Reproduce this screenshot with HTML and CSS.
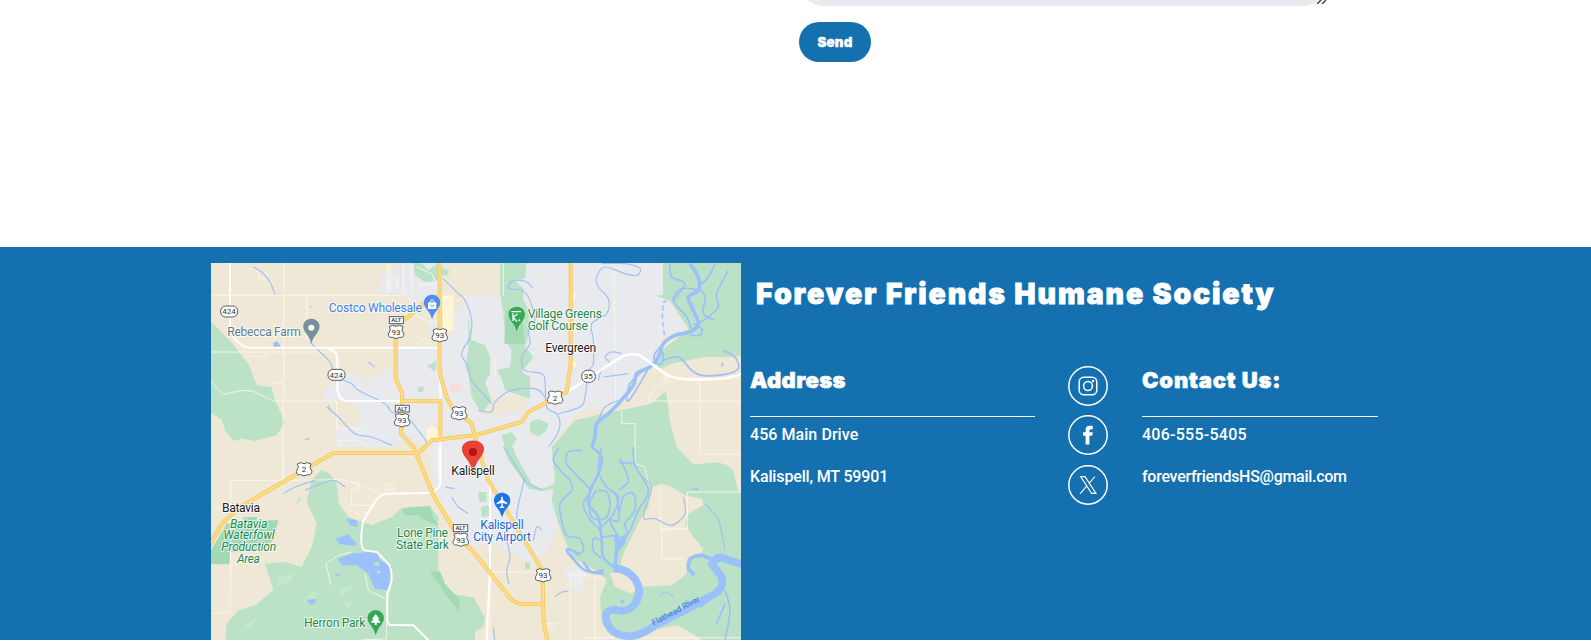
FILE: index.html
```
<!DOCTYPE html>
<html lang="en">
<head>
<meta charset="utf-8">
<title>Forever Friends Humane Society</title>
<link rel="stylesheet" href="styles.css">
</head>
<body>
<main class="contact">
  <form class="form">
    <div class="message"><svg class="grip" viewBox="0 0 10 10"><path d="M0 10L7 3M5 10L9 6"/></svg></div>
    <button class="send" type="button">Send</button>
  </form>
</main>
<footer class="footer">
  <svg class="map" viewBox="18 18 1590 1131" preserveAspectRatio="none">
    <rect class="land" width="1620" height="1160"/>
    <!-- built-up areas -->
    <g class="town">
      <path d="M525 60L560 40 600 18H700V110L640 130 585 108 525 110Z"/>
      <path d="M715 0H1375V115L1395 132 1450 215 1370 240 1345 310 1290 360 1240 440 1110 470 1040 570 1050 640 1055 730 1070 800 1020 890 990 920 960 910 830 840 810 880 750 800 690 700 670 570 620 545 560 570H390V515H440L470 480 450 440 395 430 355 425 358 390 400 385 420 350 450 345 480 370 520 360 560 330 580 275 700 270 715 230Z"/>
      <path d="M1075 935L1100 925 1145 945 1135 1000 1110 1010 1095 985Z"/>
      <path d="M665 195H700V235H680Z"/>
    </g>
    <g class="land">
      <path d="M720 18H895V115H790L750 170 745 222 720 250 700 200V115Z"/>
      <path d="M850 420H970L960 465H900L870 480 830 470Z"/>
      <path d="M970 120L990 130 980 150 968 145Z"/>
    </g>
    <g class="shop"><path d="M710 115H745V222H715Z"/><path d="M665 515L680 505 700 520V550H665ZM1100 105L1115 110 1110 125 1100 125ZM1098 315H1115V330H1098Z"/></g>
    <g class="park">
      <path d="M18 195L70 245 130 320 155 385 200 390 210 430 240 495 215 535 150 552 110 545 85 552 60 520 50 488 18 468Z"/>
      <path d="M350 638L375 650 395 680 402 740 430 780 500 805 560 780 590 752 675 748 700 780V965L740 1010 810 1022V1160H60L65 1100 100 1060 150 1045 205 1000 180 920 240 915 290 930 320 870 335 800 305 735 320 670Z"/>
      <path d="M1374 0H1620V300L1500 300 1400 320 1355 340 1355 290 1410 250 1450 215 1395 132 1352 115H1374Z"/>
      <path d="M1110 490L1245 460 1340 440 1384 400 1395 490 1415 570 1465 622 1545 615 1580 650 1590 695 1620 710V1160H1510L1420 1105 1360 1115 1300 1130 1230 1140 1190 1100 1185 1020 1205 970 1180 945 1100 900 1080 850 1060 800 1040 730 1050 670 1040 570Z"/>
      <path d="M885 18H965L960 65 930 70 955 95 955 130 970 155 975 220 960 270 985 300 950 345 975 360 975 425 900 400 890 365 875 340 915 330 920 280 900 250 895 170 885 110Z"/>
      <path d="M790 175L800 250 840 265 855 300 855 350 840 375 860 430 830 470 800 420 790 350 780 330 790 280Z"/>
      <path d="M975 495L1000 485 1030 500 1025 520 1000 540 975 525ZM890 535L920 525 935 545 920 570H900ZM665 325L680 320 695 308 690 345ZM638 392L655 388V405H640Z"/>
      <path d="M625 18H650L670 40 700 18V70L660 75 630 55ZM705 32L732 40 730 55H708Z"/>
      <path d="M895 570L925 570 930 590 980 680 1010 695 1050 680V695L1010 702 970 695 940 650 910 610ZM820 705H845V735H822ZM828 750L850 745 858 775 830 780ZM810 1030L840 1080 835 1110 810 1125ZM960 915H975V935H960Z"/>
    </g>
    <g class="land">
      <path d="M1355 340L1500 315 1620 293V700L1590 695 1575 635 1545 615 1465 622 1415 570 1395 490 1384 405 1250 455 1310 370Z"/>
      <path d="M1340 690L1370 680 1400 690 1440 715 1490 725 1495 745 1450 770 1440 800 1465 840 1495 875 1485 895 1450 900 1445 950 1400 985 1300 990 1280 1010 1230 990 1215 950 1245 930 1255 890 1290 820 1315 770 1330 750Z"/>
    </g>
    <g class="park"><path d="M1450 622H1560L1585 640 1600 708 1560 705H1520L1490 670Z"/></g>
    <g class="park-dark">
      <path d="M905 158L945 150 950 180 960 260H898Z"/>
      <path d="M18 880L65 800 115 795 115 780H155V790H220L205 850 165 880 75 885 73 922H18Z"/>
      <path d="M590 755L620 750 675 748 682 775 699 805 660 790 640 775 600 775ZM675 945L705 943 720 980 765 1030 762 1062 720 1010Z"/>
    </g>
    <g class="field"><path d="M225 960L270 945 255 975 215 990ZM315 1010L345 1000 325 1030 290 1040ZM270 740L290 710 285 735ZM400 1000L455 980 410 1015ZM115 1110L155 1080 140 1115ZM600 820L650 840 640 860ZM415 1040L450 1025 430 1055Z"/></g>
    <path class="medical" d="M730 390L755 378 770 385 765 400 738 407Z"/>

    <!-- minor roads -->
    <g class="minor">
      <path d="M18 115H600M236 18V400L232 690M18 285H400M158 35H130M158 40L165 70 185 65V40M547 20V110M305 110V250M133 275V298H182V275M18 372L55 412 110 400 145 403 205 432H395M395 432V515H480M205 378H230V370M77 670V960L75 1065 18 1070M77 670H235V600M18 750H77M235 670L410 668 440 675 500 700 525 712M555 20V105M595 20V110M620 20V110M550 75L575 60 580 90 555 95ZM635 30L680 50 695 80 640 85"/>
      <path d="M405 570V550H458L490 570M430 675H460V695L440 700V745H510M420 750L470 775 510 750M540 682H570V698H540ZM370 950L362 920 400 895 440 885M370 950L378 985M480 950L490 1000 540 1025M545 1000V1145L470 1149M700 570V670M1227 18L1232 460M895 18V115M1250 460V500H1290V620L1320 630 1325 660 1340 690M1484 365V600M1330 432H1620M1487 592H1620M1447 705H1620M1447 705V815H1370V905H1440M1366 690V820H1395M1095 1149V945M1100 945L1165 960 1200 965M1170 960V1149M1055 1100H1020L1055 1130M855 945H1010M855 700V1149M1095 955H1128V975H1110V995M870 300V360M1135 1142H1620M1395 350L1370 380 1350 390 1330 430M1380 350L1395 370 1380 380ZM640 270V255L660 245 675 260V270"/>
      <path d="M600 115L640 150 630 175 665 192H735L750 170 740 140 785 115M810 580L850 620 855 700M20 1070"/>
    </g>
    <g class="streams">
      <path d="M143 30L170 45 195 75 210 112M315 255L335 275 375 315 390 355 440 380 460 400 540 440 560 465 610 485 640 520 665 555M365 450L400 480 450 530 500 540 560 565M370 445L380 465M490 315L510 330M715 65L760 110 780 130 800 190 795 240 770 290 790 330 800 370 860 440M300 548L315 545"/>
      <path d="M985 95L965 75 930 70 910 85 915 95 950 100 970 120 980 145 990 190 970 220 975 260 950 300 960 340 1010 350 1020 375 1025 450 1055 470 1065 500 1055 535 1030 570M820 460L860 465 870 435 920 400 990 395 1020 420M1190 20L1260 20 1305 35 1295 55 1260 50 1200 30 1175 60 1180 90 1210 125 1205 170 1160 200 1165 250 1165 320 1150 345 1140 420 1125 450 1060 470M1180 370L1190 340 1215 320 1200 300 1220 285 1250 290M1195 360L1270 350M1180 490L1200 450 1240 430"/>
      <path d="M420 690L380 670 300 700M235 710L270 690 330 670M895 570L910 590 940 640 970 680 1010 698M960 660L950 700 935 770 940 790M740 720L760 750 790 770M720 690L750 695M905 850L915 900 905 940 912 980M865 1110L870 1160M985 850L995 810 1010 820M1050 1020L1070 1005 1090 1003M1365 1020L1380 1005 1405 1020M1500 740L1540 790 1560 880M1310 660L1340 690 1315 780 1350 785 1400 805 1440 770 1435 720"/>
    </g>
    <!-- braided river -->
    <g class="river">
      <path class="w12" d="M1455 20L1480 60 1480 100 1450 120 1465 160 1480 200 1455 225 1410 235 1375 260 1360 300 1335 330 1295 350 1285 385 1240 440 1210 470 1175 500 1170 540 1160 570"/>
      <path class="w8" d="M1160 570L1190 600 1180 650 1160 690 1150 740 1180 780 1190 850 1195 900 1225 930M1245 845L1235 870 1230 930"/>
      <path class="w6" d="M1480 90L1510 60 1530 20M1480 100L1430 95 1405 130 1445 180 1460 220M1405 130L1440 80 1400 60 1395 20M1480 90L1500 120 1495 170 1530 190M1480 200L1510 180 1540 150 1535 110 1570 40M1465 200L1490 215 1485 235 1455 235M1375 260L1350 290 1350 315 1370 320 1375 285M1310 345L1275 380 1265 430 1280 420 1310 370 1330 335"/>
      <path class="w6" d="M1060 575L1045 610 1075 650 1095 670 1100 700 1065 740 1070 790 1085 835 1125 845 1135 880 1115 895M1130 580L1090 585 1085 620 1120 660 1155 700 1135 740 1150 780 1185 820M1190 850L1165 845 1165 880 1190 905M1175 700L1155 735 1160 780 1200 785 1215 745 1205 705 1180 700M1190 570L1180 640 1205 690 1240 720 1225 770 1190 810M1210 695L1235 720 1240 790 1215 790 1245 850M1240 780L1255 720 1285 710 1290 760 1260 800 1270 830M1190 840L1240 835M1285 570L1290 625 1330 700 1300 760 1270 830 1245 850M1240 615L1290 620M1245 605L1270 670 1240 700M1375 310L1420 300 1460 340 1490 355 1560 352 1600 335 1590 300 1555 280"/>
      <path class="w8" d="M1195 950L1140 940 1100 900 1085 880 1095 878 1125 892M1135 915L1160 945 1195 940"/>
      <path d="M1225 835L1245 840 1265 830 1260 860 1240 885 1235 925 1225 925 1232 870Z" class="lake"/>
      <path class="w24" d="M1225 935Q1270 935 1292 970T1290 1040Q1270 1070 1230 1058Q1190 1060 1208 1100Q1220 1135 1275 1138Q1310 1135 1350 1105L1440 1060 1530 1010Q1560 990 1550 960L1520 920Q1535 895 1560 905L1620 925"/>
      <path class="w12" d="M1530 910L1490 895Q1445 895 1450 935L1468 955M1525 1015L1490 1045 1440 1035"/>
      <path class="w6" d="M1560 1000L1575 1060 1560 1149M1560 1040L1535 1100"/>
      <path class="lake" d="M425 785L455 790 460 810 435 805ZM392 845L430 832 455 860 450 866 405 862ZM398 905L440 890 515 882 525 910 560 930 555 980 545 1000 510 995 490 950 455 925 410 925ZM385 950L405 952 400 957ZM307 1028L330 1025 333 1035 320 1043 308 1036ZM1245 1030L1255 1030 1258 1038 1248 1038ZM204 258L218 253 228 270H207ZM315 145L323 150 320 153ZM1550 315L1558 322 1548 330ZM1450 697L1480 693 1478 700Z"/>
      <path class="park" d="M505 920L520 912 525 925 510 928ZM512 945L528 938 522 952Z"/>
      <path class="dash" d="M1378 235L1372 180 1375 135 1385 132"/>
    </g>
    <!-- highways -->
    <g class="white-road">
      <path d="M75 18V210Q80 255 130 272H700M370 274Q395 280 397 310V390Q398 430 425 432H600"/>
      <path d="M706 370V680Q695 705 675 708L540 710Q520 715 500 750L475 790Q460 870 480 880L515 885 550 920Q560 930 560 970L547 1015V1090Q548 1105 560 1104L625 1105 670 1149M855 660V940L845 1149"/>
      <path class="wide" d="M1090 403L1240 305Q1270 285 1305 295L1380 350Q1410 370 1480 367Q1580 370 1620 345"/>
    </g>
    <g class="route-edge">
      <path id="r1" d="M704 0V340Q718 420 745 455L800 500 815 560 850 670 1012 940 1015 1070Q1016 1110 1030 1160"/>
      <path id="r2" d="M704 115L655 140 610 180 572 200V365L592 410 588 530 625 570 685 715 760 840 810 890 905 1010Q925 1042 955 1042H1014"/>
      <path id="r3" d="M0 890L50 800 105 750 385 588H640L680 550 810 535 950 495 970 465 1085 405 1097 320V0M592 432H706V555"/>
    </g>
    <g class="route"><use href="#r1"/><use href="#r2"/><use href="#r3"/></g>
    <g class="route-line"><use href="#r1"/><use href="#r2"/><use href="#r3"/></g>

    <!-- route shields -->
    <g class="shields">
      <rect x="47" y="147" width="51" height="33" rx="15"/><text x="72" y="172">424</text>
      <rect x="369" y="337" width="51" height="33" rx="15"/><text x="394" y="362">424</text>
      <rect x="1130" y="340" width="41" height="36" rx="17"/><text x="1150" y="366">35</text>
      <g id="us"><path d="M553 209L563 205 573 208 584 205 594 209 591 219 597 232Q595 243 584 241L573 245 563 241Q550 243 550 231L556 219Z"/></g>
      <use href="#us" x="131" y="10"/><use href="#us" x="189" y="244"/><use href="#us" x="18" y="265"/><use href="#us" x="477" y="197"/><use href="#us" x="-276" y="412"/><use href="#us" x="194" y="623"/><use href="#us" x="441" y="730"/>
      <text x="573" y="234">93</text><text x="704" y="244">93</text><text x="762" y="478">93</text><text x="591" y="499">93</text><text x="1050" y="431">2</text><text x="297" y="646">2</text><text x="767" y="857">93</text><text x="1014" y="964">93</text>
      <g class="alt"><rect x="553" y="179" width="42" height="21"/><text x="574" y="196">ALT</text><rect x="571" y="445" width="42" height="20"/><text x="592" y="461">ALT</text><rect x="745" y="803" width="43" height="21"/><text x="767" y="820">ALT</text></g>
    </g>

    <!-- place pins -->
    <g class="pin-gray"><path id="pin-base" d="M319 259Q315 241 302 227C285 203 302 185 319 185S354 203 337 227Q324 241 319 259Z"/></g>
    <circle cx="319" cy="212" r="9" fill="#fff"/>
    <use href="#pin-base" class="pin-blue" x="362" y="-72"/><path d="M669 136H694V156H669Z" fill="#fff"/><path d="M676 144Q681 153 687 144" fill="none" stroke="#4285f4" stroke-width="2.5"/><path d="M675 136Q681 120 688 136" fill="none" stroke="#fff" stroke-width="3"/>
    <use href="#pin-base" class="pin-green" x="616" y="-36"/><path d="M919 164H948M924 169V192M938 170L925 181 936 194" fill="none" stroke="#fff" stroke-width="4"/><circle cx="943" cy="190" r="3" fill="#fff"/>
    <use href="#pin-base" class="pin-green" x="193" y="875"/><path d="M512 1071L501 1086H505L497 1097H509V1104H515V1097H527L519 1086H523Z" fill="#fff"/>
    <use href="#pin-base" class="pin-airport" x="572" y="522"/><path d="M889 719H893L894 729 907 738V742L893 738V747L898 751V754L891 752 884 754V751L889 747V738L875 742V738L888 729Z" fill="#fff"/>
    <path class="pin-red" d="M804 651Q801 624 785 604C760 574 775 552 804 552S848 574 823 604Q807 624 804 651Z"/><circle cx="804" cy="585" r="12" fill="#b31412"/>

    <g class="labels">
      <text class="blue" x="371" y="164" textLength="280">Costco Wholesale</text>
      <text class="gray" x="67" y="236" textLength="221">Rebecca Farm</text>
      <text class="green" x="968" y="183" textLength="223">Village Greens</text>
      <text class="green" x="968" y="218" textLength="181">Golf Course</text>
      <text x="1021" y="286" textLength="153">Evergreen</text>
      <text x="739" y="654" textLength="130">Kalispell</text>
      <text class="blue-dark" x="826" y="817" textLength="130">Kalispell</text>
      <text class="blue-dark" x="805" y="853" textLength="173">City Airport</text>
      <text x="51" y="765" textLength="114">Batavia</text>
      <g class="green italic"><text x="75" y="812" textLength="112">Batavia</text><text x="55" y="847" textLength="154">Waterfowl</text><text x="49" y="882" textLength="165">Production</text><text x="96" y="917" textLength="69">Area</text></g>
      <text class="green" x="576" y="841" textLength="153">Lone Pine</text><text class="green" x="573" y="875" textLength="159">State Park</text>
      <text class="green" x="297" y="1110" textLength="184">Herron Park</text>
      <text class="river-name" transform="translate(1346 1106) rotate(-28)" textLength="158">Flathead River</text>
    </g>
  </svg>
  <section class="info">
    <h1 class="name">Forever Friends Humane Society</h1>
    <div class="columns">
      <div class="address"><h2 class="heading">Address</h2><p class="line">456 Main Drive</p><p class="line city">Kalispell, MT 59901</p></div>
      <div class="social">
        <svg class="icon" viewBox="0 0 40 40"><circle class="ring" cx="20" cy="20" r="19.2"/><rect class="ig" x="11.2" y="11.2" width="17.6" height="17.6" rx="4.6"/><circle class="ig" cx="20" cy="20" r="4.4"/><circle cx="25.1" cy="15" r="1.2" fill="#fff"/></svg>
        <svg class="icon" viewBox="0 0 40 40"><circle class="ring" cx="20" cy="20" r="19.2"/><path fill="#fff" d="M17.6 29.5V20.8H15V17.2H17.6V14.8Q17.6 10.8 21.6 10.8H24.8V14.2H23Q21.4 14.2 21.4 15.8V17.2H24.8L24.3 20.8H21.4V29.5Z"/></svg>
        <svg class="icon icon-x" viewBox="0 0 40 40"><circle class="ring" cx="20" cy="20" r="19.2"/><path class="x" d="M12.6 11.6H17L28 28.4H23.6ZM27 11.5L20.8 18.7M19 20.7L12.2 28.6"/></svg>
      </div>
      <div class="contact-us"><h2 class="heading us-heading">Contact Us:</h2><p class="line phone">406-555-5405</p><p class="line email">foreverfriendsHS@gmail.com</p></div>
    </div>
  </section>
</footer>
<script src="water.js"></script>
</body>
</html>
```
FILE: water.js
```
// Round the watercourses: each polyline becomes a Catmull-Rom curve.
document.querySelectorAll('.streams path, .w6, .w8, .river .w12').forEach(function (path) {
  var d = path.getAttribute('d');
  if (/[QVHZ]/.test(d)) return;
  path.setAttribute('d', d.split('M').filter(Boolean).map(function (part) {
    var n = part.match(/-?[\d.]+/g).map(Number), p = [];
    for (var i = 0; i < n.length; i += 2) p.push([n[i], n[i + 1]]);
    var out = 'M' + p[0];
    for (var j = 0; j < p.length - 1; j++) {
      var a = p[j - 1] || p[j], b = p[j], c = p[j + 1], e = p[j + 2] || c;
      out += 'C' + [b[0] + (c[0] - a[0]) / 6, b[1] + (c[1] - a[1]) / 6,
        c[0] - (e[0] - b[0]) / 6, c[1] - (e[1] - b[1]) / 6, c[0], c[1]].join(' ');
    }
    return out;
  }).join(''));
});
```
FILE: styles.css
```
* { box-sizing: border-box; }
body { margin: 0; background: #fff; overflow: hidden; font-family: Roboto, "Liberation Sans", sans-serif; }
.contact { height: 247px; padding-left: 799px; }
.form { display: flex; flex-direction: column; align-items: flex-start; gap: 16px; }
.message { display: flex; justify-content: flex-end; align-items: flex-end; width: 529px; height: 60px; margin-top: -54px; border-radius: 25px; background: #e9e9ef; }
.grip { width: 10px; height: 10px; margin: 0 1px 2px 0; fill: none; stroke: #444; stroke-width: 1.5; }
.send { width: 72px; height: 40px; padding: 0; border: 0; border-radius: 20px; background: #1570b0; color: #fff; font: 900 13.3px Inter, sans-serif; letter-spacing: .2px; -webkit-text-stroke: .4px #fff; }
.footer { display: flex; height: 393px; padding: 16px 0 0 211px; background: #1570b0; color: #fff; }
.map { flex: none; width: 530px; height: 377px; }
.info { padding: 13px 0 0 9px; }
.name { margin: 0 0 0 6px; font: 900 28.5px/36px Inter, sans-serif; letter-spacing: 1.85px; white-space: nowrap; -webkit-text-stroke: .8px #fff; }
.columns { display: flex; margin-top: 54px; }
.address { width: 285px; }
.social { display: flex; flex-direction: column; gap: 9px; width: 40px; margin: 0 34px 0 33px; }
.icon { width: 40px; height: 40px; }
.icon-x { margin-top: 1px; }
.ring, .ig, .x { fill: none; stroke: #fff; stroke-width: 1.5; }
.x { stroke-width: 1.1; }
.contact-us { width: 236px; }
.heading { height: 51px; margin: 0 0 8px; border-bottom: 1px solid #fff; font: 900 22px/29px Inter, sans-serif; letter-spacing: .4px; white-space: nowrap; -webkit-text-stroke: .6px #fff; }
.us-heading { letter-spacing: .85px; }
.line { margin: 0 0 23px; font-size: 16px; font-weight: 500; line-height: 19px; letter-spacing: .06px; white-space: nowrap; }
.city { letter-spacing: -.15px; }
.phone { letter-spacing: .25px; }
.email { letter-spacing: -.28px; }

.land { fill: #f0e8d6; } .town { fill: #e8eaed; } .park { fill: #bbe2c6; } .park-dark { fill: #a4d9b5; }
.field { fill: #c5e7cb; } .shop { fill: #fef5d5; } .medical { fill: #fadadd; }
.minor, .streams, .river, .white-road, .route, .route-edge, .route-line { fill: none; stroke-linejoin: round; }
.minor { stroke: #fbf8f0; stroke-width: 2.5; }
.streams { stroke: #9fc1f5; stroke-width: 3.5; }
.river { stroke: #9cc0f9; }
.w6 { stroke-width: 5; } .w8 { stroke-width: 8; } .w12 { stroke-width: 11; } .w24 { stroke-width: 23; }
.lake { fill: #9cc0f9; stroke: none; } .river .park { stroke: none; } .dash { stroke-width: 4; stroke-dasharray: 16 9; }
.white-road { stroke: #fff; stroke-width: 6; } .wide { stroke-width: 8; }
.route-edge { stroke: #f8c555; stroke-width: 12; } .route { stroke: #fde293; stroke-width: 7; } .route-line { stroke: #f9ca60; stroke-width: 1.5; }
.shields { fill: #fff; stroke: #555b60; stroke-width: 3; }
.shields text { fill: #333; stroke: none; font-size: 24px; text-anchor: middle; }
.shields .alt text { font-size: 18px; font-weight: 500; }
.pin-gray { fill: #78909c; } .pin-blue { fill: #4f8df5; } .pin-green { fill: #34a853; } .pin-airport { fill: #1a73e8; } .pin-red { fill: #ea4335; stroke: #c5221f; stroke-width: 2; }
.labels { fill: #222; stroke: #fff; stroke-opacity: .75; stroke-width: 6; stroke-linejoin: round; paint-order: stroke; font-size: 36.5px; }
.blue { fill: #3f80ee; } .blue-dark { fill: #1967d2; } .gray { fill: #607d8b; } .green { fill: #23894a; } .italic { font-style: italic; }
.river-name { fill: #3476d5; stroke: none; font-size: 25px; }
```
